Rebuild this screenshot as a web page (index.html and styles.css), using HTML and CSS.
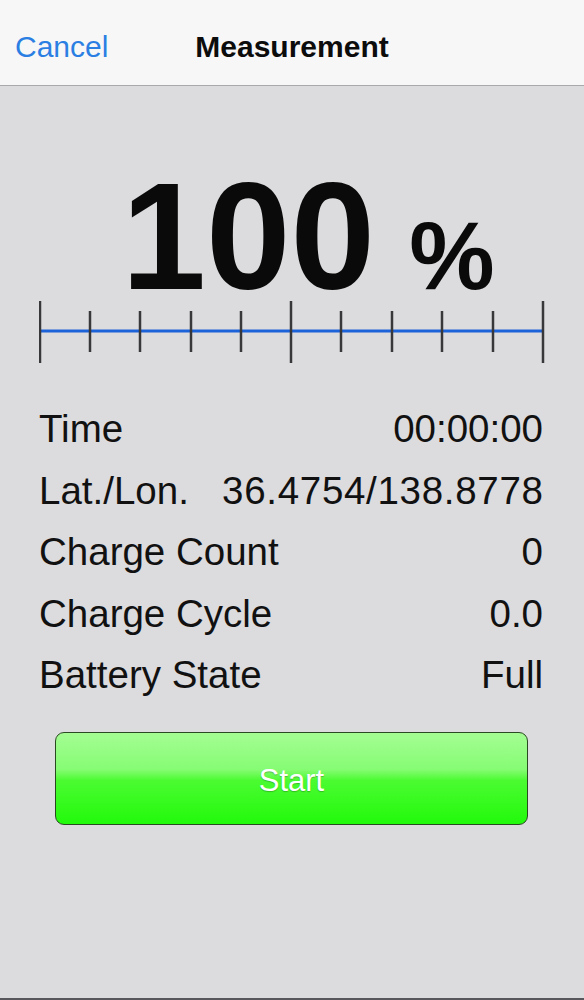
FILE: index.html
```html
<!DOCTYPE html>
<html lang="en">
<head>
    <meta charset="UTF-8">
    <meta name="viewport" content="width=device-width, initial-scale=1.0">
    <title>Measurement</title>
    <link rel="stylesheet" href="styles.css">
</head>
<body>
    <div class="screen">
        <header class="navbar">
            <a class="nav-cancel" href="#">Cancel</a>
            <h1 class="nav-title">Measurement</h1>
            <span></span>
        </header>

        <main class="content">
            <div class="level">100<span class="level-unit">%</span></div>

            <svg class="ruler" width="506" height="62" viewBox="0 0 506 62">
                <line x1="1" y1="30" x2="504" y2="30" stroke="#1c62d8" stroke-width="3"/>
                <g stroke="#38383a" stroke-width="2.5">
                    <line x1="1" y1="0" x2="1" y2="62"/>
                    <line x1="51" y1="10" x2="51" y2="51"/>
                    <line x1="101" y1="10" x2="101" y2="51"/>
                    <line x1="152" y1="10" x2="152" y2="51"/>
                    <line x1="202" y1="10" x2="202" y2="51"/>
                    <line x1="252" y1="0" x2="252" y2="62"/>
                    <line x1="302" y1="10" x2="302" y2="51"/>
                    <line x1="353" y1="10" x2="353" y2="51"/>
                    <line x1="403" y1="10" x2="403" y2="51"/>
                    <line x1="454" y1="10" x2="454" y2="51"/>
                    <line x1="504" y1="0" x2="504" y2="62"/>
                </g>
            </svg>

            <div class="info">
                <div class="info-row"><span>Time</span><span>00:00:00</span></div>
                <div class="info-row"><span>Lat./Lon.</span><span class="wide">36.4754/138.8778</span></div>
                <div class="info-row"><span>Charge Count</span><span>0</span></div>
                <div class="info-row"><span>Charge Cycle</span><span>0.0</span></div>
                <div class="info-row"><span>Battery State</span><span>Full</span></div>
            </div>

            <button class="btn-start">Start</button>
        </main>
    </div>
</body>
</html>
```

FILE: styles.css
```css
body{
    margin: 0;
    padding: 0;
    font-family: "Liberation Sans", Arial, sans-serif;
    color: #111;
}
.screen{
    height: 1000px;
    box-sizing: border-box;
    background: #dcdbde;
    border-bottom: 2px solid #58575c;
    display: flex;
    flex-direction: column;
}
.navbar{
    height: 86px;
    box-sizing: border-box;
    padding-top: 8px;
    background: #f7f7f8;
    border-bottom: 1px solid #a9a9ab;
    display: grid;
    grid-template-columns: 1fr auto 1fr;
    align-items: center;
}
.nav-cancel{
    padding-left: 15px;
    font-size: 30px;
    color: #2b7fe3;
    text-decoration: none;
}
.nav-title{
    margin: 0;
    font-size: 30px;
    font-weight: bold;
    color: #0c0c0c;
}
.content{
    flex: 1;
    display: flex;
    flex-direction: column;
}
.level{
    margin-top: 90px;
    padding-left: 32px;
    text-align: center;
    font-size: 152px;
    font-weight: bold;
    line-height: 120px;
    color: #0a0a0a;
}
.level-unit{
    margin-left: 34px;
    font-size: 96px;
    line-height: 0;
}
.ruler{
    display: block;
    margin: 5px 0 0 39px;
}
.info{
    margin-top: 35px;
    padding: 0 41px 0 39px;
}
.info-row{
    display: flex;
    justify-content: space-between;
    font-size: 38.5px;
    line-height: 61.5px;
}
.info-row .wide{
    letter-spacing: 0.7px;
    margin-right: -0.7px;
}
.btn-start{
    margin: 26px 56px 0 55px;
    height: 93px;
    padding-top: 6px;
    border: 1.5px solid #2a4a22;
    border-radius: 9px;
    background: linear-gradient(to bottom, #a4fd93 0%, #86fc74 40%, #4bfb31 52%, #22fa0b 100%);
    color: #fff;
    font-family: "Liberation Sans", Arial, sans-serif;
    font-size: 31px;
    text-shadow: 0 1px 1px rgba(0,0,0,0.25);
    cursor: pointer;
}
```
